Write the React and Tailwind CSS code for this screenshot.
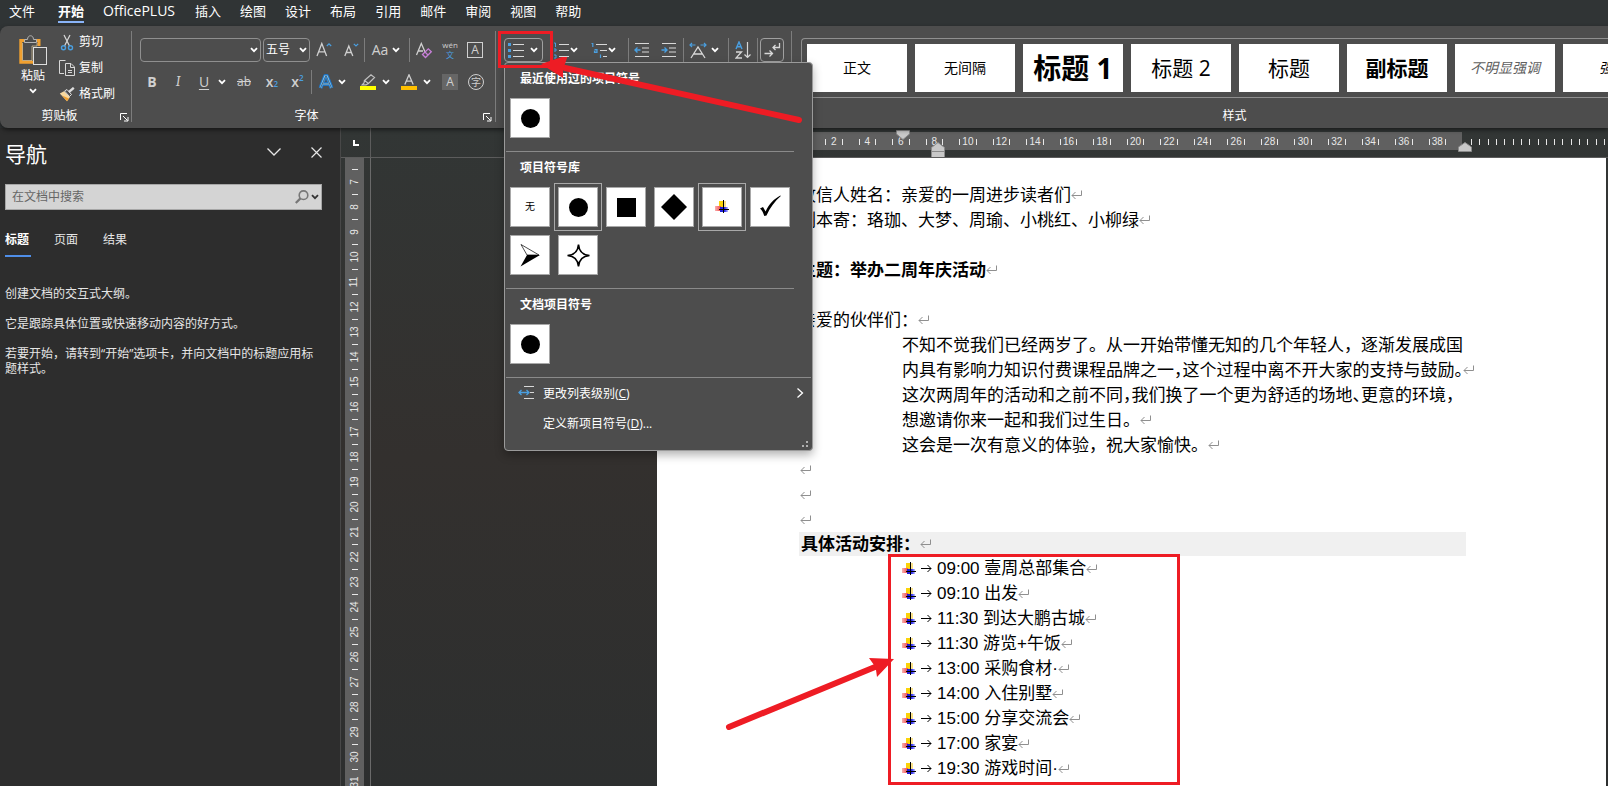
import { useState } from "react";

const menuTabs = ["文件", "开始", "OfficePLUS", "插入", "绘图", "设计", "布局", "引用", "邮件", "审阅", "视图", "帮助"];

const styleCards = [
  { name: "正文", className: "text-sm text-black" },
  { name: "无间隔", className: "text-sm text-black" },
  { name: "标题 1", className: "text-[28px] font-bold text-black" },
  { name: "标题 2", className: "text-[21px] text-black" },
  { name: "标题", className: "text-[21px] text-black", key: "title" },
  { name: "副标题", className: "text-[21px] font-bold text-black" },
  { name: "不明显强调", className: "text-sm italic text-[#606060]" },
  { name: "强调", className: "text-sm italic text-black" },
];

const schedule = [
  { time: "09:00", text: "壹周总部集合" },
  { time: "09:10", text: "出发" },
  { time: "11:30", text: "到达大鹏古城" },
  { time: "11:30", text: "游览+午饭" },
  { time: "13:00", text: "采购食材·" },
  { time: "14:00", text: "入住别墅" },
  { time: "15:00", text: "分享交流会" },
  { time: "17:00", text: "家宴" },
  { time: "19:30", text: "游戏时间·" },
];

const rulerNumbers = Array.from({ length: 19 }, (_, i) => (i + 1) * 2);
const outerTicks = Array.from({ length: 17 }, (_, i) => i);
const sideNumbers = Array.from({ length: 25 }, (_, i) => i + 7);

/* ---------- small shared pieces ---------- */

const Chevron = ({ className = "" }) => (
  <svg width="8" height="6" viewBox="0 0 8 6" fill="none" stroke="currentColor" strokeWidth="1.8" className={`shrink-0 ${className}`}>
    <path d="M1 1.2 L4 4.2 L7 1.2" />
  </svg>
);

const Divider = () => <div className="h-6 w-px shrink-0 bg-[#7d7d7d]" />;

const ToolButton = ({ label, className = "", children }) => (
  <button type="button" aria-label={label} className={`flex h-6 shrink-0 items-center justify-center ${className}`}>
    {children}
  </button>
);

const Launcher = ({ label }) => (
  <button type="button" aria-label={label} className="text-white">
    <svg width="9" height="9" viewBox="0 0 9 9" fill="none" stroke="currentColor">
      <path d="M0.5 7 V0.5 H7 M3 3 L7.5 7.5 M8 4 V8 H4" />
    </svg>
  </button>
);

const ReturnMark = () => (
  <svg width="12" height="10" viewBox="0 0 12 10" fill="none" stroke="#8f8f8f" className="inline-block shrink-0">
    <path d="M10.5 0.5 V5.5 H1 M4.5 2 L1 5.5 L4.5 9" />
  </svg>
);

const PictureBullet = () => (
  <svg width="14" height="14" viewBox="0 0 14 14" className="shrink-0">
    <defs>
      <linearGradient id="redFade" x1="0" x2="1">
        <stop offset="0" stopColor="#f9b0b0" />
        <stop offset="1" stopColor="#f04848" />
      </linearGradient>
      <linearGradient id="blueFade" x1="0" x2="1">
        <stop offset="0" stopColor="#1c1cd0" />
        <stop offset="0.6" stopColor="#2a2af0" />
        <stop offset="1" stopColor="#c4c4ff" />
      </linearGradient>
    </defs>
    <rect x="4" y="1" width="7" height="7" fill="#fbe38a" />
    <rect x="4" y="1" width="4" height="6" fill="#fbd30a" />
    <rect x="0" y="6" width="6" height="5" fill="url(#redFade)" />
    <rect x="5" y="7" width="8" height="5" fill="url(#blueFade)" />
    <path d="M8.5 0 V13 M4 9.5 H14" stroke="#000" fill="none" />
  </svg>
);

const Lines = ({ x = 6 }) => <path d={`M${x} 2.5 H16 M${x} 8.5 H16 M${x} 14.5 H16`} stroke="#d8d8d8" />;

/* ---------- ribbon ---------- */

const ClipboardGroup = () => (
  <section aria-label="剪贴板" className="flex w-[132px] shrink-0 flex-col border-r border-[#7d7d7d]">
    <div className="flex pl-3">
      <button type="button" className="flex w-[42px] flex-col items-center pt-1">
        <svg width="28" height="31" viewBox="0 0 28 31" fill="none">
          <path d="M6 5.5 H1.8 V27.2 H14 M17 5.5 H20 V11" stroke="#f0a030" strokeWidth="3" />
          <path d="M3.5 8 V25.5 H13 V11 H18 V8" stroke="#f7dba8" strokeWidth="0.6" />
          <path d="M5.5 7.5 V4.5 H8.5 C8.5 -0.5 14.5 -0.5 14.5 4.5 H17.5 V7.5 Z" fill="#4d4d4d" stroke="#b5b5b5" />
          <rect x="14.5" y="12.5" width="13" height="17" fill="#4d4d4d" stroke="#dedede" />
        </svg>
        <span className="mt-0.5 leading-4">粘贴</span>
        <Chevron className="mt-1" />
      </button>
      <div className="ml-[5px] flex flex-col gap-1">
        <button type="button" className="flex h-[22px] items-center gap-1">
          <svg width="16" height="17" viewBox="0 0 16 17" fill="none">
            <path d="M5 1 L10.5 12 M11 1 L5.5 12" stroke="#d8d8d8" strokeWidth="1.2" />
            <circle cx="4.5" cy="13.8" r="2" stroke="#4a9fe0" strokeWidth="1.4" />
            <circle cx="11.5" cy="13.8" r="2" stroke="#4a9fe0" strokeWidth="1.4" />
          </svg>
          剪切
        </button>
        <button type="button" className="flex h-[22px] items-center gap-1">
          <svg width="16" height="16" viewBox="0 0 16 16" fill="none" stroke="#d8d8d8">
            <path d="M5 13.5 H0.5 V0.5 H6.5" />
            <path d="M6.5 3.5 H12 L15.5 7 V15.5 H6.5 Z M11.5 3.5 V7.5 H15.5 M9 10.5 H13 M9 12.5 H13" />
          </svg>
          复制
        </button>
        <button type="button" className="flex h-[22px] items-center gap-1">
          <svg width="16" height="15" viewBox="0 0 16 15" fill="none">
            <path d="M0.8 6.5 L5 4.2 L11 10 L8 14.3 Z" fill="#f7d9a0" />
            <path d="M3 8.5 L10 11.5 L8 14.3 Z" fill="#f0a030" />
            <path d="M5.5 4 L8 2.5 L12.5 7.5 L10.5 9.5 Z" fill="#4d4d4d" stroke="#dedede" />
            <path d="M10 4.8 L14.8 0.8" stroke="#dedede" strokeWidth="2.4" />
          </svg>
          格式刷
        </button>
      </div>
    </div>
    <div className="mt-auto flex items-end leading-[12px]">
      <span className="flex-1 pl-[38px] text-center">剪贴板</span>
      <div className="flex w-[50px] pl-[39px]">
        <Launcher label="剪贴板设置" />
      </div>
    </div>
  </section>
);

const FontGroup = () => (
  <section aria-label="字体" className="flex w-[364px] shrink-0 flex-col border-r border-[#7d7d7d] pl-2 pt-[7px] text-[#d0d0d0]">
    <div className="flex items-center">
      <div className="relative flex items-center">
        <select aria-label="字体名称" className="h-6 w-[121px] appearance-none rounded border border-[#8f8f8f] bg-[#4d4d4d] px-1">
          <option></option>
        </select>
        <Chevron className="pointer-events-none absolute right-[3px] text-white" />
      </div>
      <div className="relative ml-0.5 flex items-center">
        <select aria-label="字号" className="h-6 w-[47px] appearance-none rounded border border-[#8f8f8f] bg-[#4d4d4d] px-0.5 text-xs text-white">
          <option>五号</option>
        </select>
        <Chevron className="pointer-events-none absolute right-[3px] text-white" />
      </div>
      <ToolButton label="增大字号" className="w-7">
        <svg width="16" height="16" viewBox="0 0 16 16" fill="none">
          <path d="M1 14 L5.8 1.5 L10.6 14 M2.8 9.8 H8.9" stroke="#d0d0d0" strokeWidth="1.3" />
          <path d="M10.8 4 L13 1.8 L15.2 4" stroke="#4a9fe0" strokeWidth="1.2" />
        </svg>
      </ToolButton>
      <ToolButton label="减小字号" className="w-[26px]">
        <svg width="16" height="16" viewBox="0 0 16 16" fill="none">
          <path d="M1.8 14 L5.8 4 L9.8 14 M3.3 10.5 H8.3" stroke="#d0d0d0" strokeWidth="1.3" />
          <path d="M10.8 1.8 L13 4 L15.2 1.8" stroke="#4a9fe0" strokeWidth="1.2" />
        </svg>
      </ToolButton>
      <Divider />
      <ToolButton label="更改大小写" className="w-[42px] gap-1 text-sm">
        Aa <Chevron className="text-white" />
      </ToolButton>
      <div className="ml-0.5">
        <Divider />
      </div>
      <ToolButton label="清除所有格式" className="w-7">
        <svg width="18" height="17" viewBox="0 0 18 17" fill="none">
          <path d="M1.5 13 L6.3 1.5 L10.5 11 M3.2 9 H8" stroke="#d0d0d0" strokeWidth="1.3" />
          <path d="M7.5 12.5 L13.3 6.8 L16.3 9.8 L10.5 15.5 Z M10 10 L13 13" stroke="#c77fd8" strokeWidth="1.3" />
        </svg>
      </ToolButton>
      <ToolButton label="拼音指南" className="w-6 flex-col gap-0.5">
        <span className="text-[8px] leading-[8px]">wén</span>
        <span className="text-[8px] leading-[8px] text-[#4a9fe0]">文</span>
      </ToolButton>
      <ToolButton label="字符边框" className="w-[26px]">
        <span className="flex size-4 items-center justify-center border border-[#d0d0d0] text-xs">A</span>
      </ToolButton>
    </div>
    <div className="mt-2 flex items-center text-sm">
      <ToolButton label="加粗" className="w-6 font-bold">B</ToolButton>
      <ToolButton label="倾斜" className="w-7 font-serif italic">I</ToolButton>
      <ToolButton label="下划线" className="w-6">
        <span className="underline underline-offset-2">U</span>
      </ToolButton>
      <ToolButton label="下划线样式" className="w-3 text-white"><Chevron /></ToolButton>
      <ToolButton label="删除线" className="w-8 text-xs">
        <span className="line-through">ab</span>
      </ToolButton>
      <ToolButton label="下标" className="w-6 font-semibold">
        x<sub className="text-[8px] text-[#4a9fe0]">2</sub>
      </ToolButton>
      <ToolButton label="上标" className="w-[27px] font-semibold">
        x<sup className="text-[8px] text-[#4a9fe0]">2</sup>
      </ToolButton>
      <Divider />
      <ToolButton label="文本效果和版式" className="ml-0.5 w-6">
        <svg width="16" height="16" viewBox="0 0 16 16" fill="none" strokeLinejoin="round">
          <path d="M2.5 14 L7.2 2 H8.8 L13.5 14 M5 10 H11" stroke="#1f74c4" strokeWidth="4" />
          <path d="M2.5 14 L7.2 2 H8.8 L13.5 14 M5 10 H11" stroke="#7cc4f5" strokeWidth="2" />
          <path d="M2.5 14 L8 1.5 L13.5 14 M5 10 H11" stroke="#35506a" strokeWidth="0.8" />
        </svg>
      </ToolButton>
      <ToolButton label="文本效果选项" className="w-2 text-white"><Chevron /></ToolButton>
      <ToolButton label="文本突出显示颜色" className="ml-2.5 w-6">
        <svg width="16" height="16" viewBox="0 0 16 16" fill="none">
          <path d="M4.5 6.5 L11 0.8 L14.5 3.5 L8.5 9.5 Z M4.5 6.5 L4 9 L2.2 10.8 H6 L8.5 9.5" stroke="#c0c0c0" strokeWidth="1.2" />
          <rect y="12" width="16" height="4" fill="#ffff00" />
        </svg>
      </ToolButton>
      <ToolButton label="突出显示选项" className="w-3 text-white"><Chevron /></ToolButton>
      <ToolButton label="字体颜色" className="ml-[5px] w-6">
        <svg width="16" height="16" viewBox="0 0 16 16" fill="none">
          <path d="M3.8 10.5 L8 0.8 L12.2 10.5 M5.2 7.2 H10.8" stroke="#d0d0d0" strokeWidth="1.3" />
          <rect y="12" width="16" height="4" fill="#ffc000" />
        </svg>
      </ToolButton>
      <ToolButton label="字体颜色选项" className="w-3 text-white"><Chevron /></ToolButton>
      <ToolButton label="字符底纹" className="ml-[5px] w-6">
        <span className="flex size-4 items-center justify-center bg-[#666666] text-xs">A</span>
      </ToolButton>
      <ToolButton label="带圈字符" className="ml-0.5 w-6">
        <span className="flex size-4 items-center justify-center rounded-full border border-[#d0d0d0] text-[10px]">字</span>
      </ToolButton>
    </div>
    <div className="mt-auto flex items-end leading-[12px] text-white">
      <span className="flex-1 pr-2.5 text-center">字体</span>
      <div className="flex w-3">
        <Launcher label="字体设置" />
      </div>
    </div>
  </section>
);

const Swatch = ({ label, selected, children }) => (
  <button
    type="button"
    aria-label={label}
    className={`flex size-10 items-center justify-center border border-[#a8a8a8] bg-white text-black ${
      selected ? "outline outline-offset-3 outline-[#a8a8a8]" : ""
    }`}
  >
    {children}
  </button>
);

const Disc = () => <span className="size-[19px] rounded-full bg-black" />;

const BulletMenu = () => (
  <div className="absolute -left-px top-[23px] z-10 h-[389px] w-[309px] rounded border border-[#9a9a9a] bg-[#4d4d4d] text-left text-xs text-white shadow-[0_4px_10px_rgba(0,0,0,0.3)]">
    <h3 className="mb-[3px] pl-[15px] font-bold leading-[32px]">最近使用过的项目符号</h3>
    <div className="pl-[5px]">
      <Swatch label="实心圆"><Disc /></Swatch>
    </div>
    <div className="ml-px mr-[18px] mt-[13px] h-px bg-[#8a8a8a]" />

    <h3 className="mb-[3px] pl-[15px] font-bold leading-[32px]">项目符号库</h3>
    <div className="flex flex-wrap gap-2 pl-[5px]">
      <Swatch label="无"><span className="text-[10px]">无</span></Swatch>
      <Swatch label="实心圆" selected><Disc /></Swatch>
      <Swatch label="实心方块"><span className="size-[19px] bg-black" /></Swatch>
      <Swatch label="菱形">
        <svg width="26" height="26" viewBox="0 0 26 26"><path d="M13 0 L26 13 L13 26 L0 13 Z" /></svg>
      </Swatch>
      <Swatch label="图片" selected><PictureBullet /></Swatch>
      <Swatch label="对勾">
        <svg width="24" height="28" viewBox="0 0 24 28">
          <path d="M2 15.5 L5 14 L7.6 18.5 C11 11 16 6 22.3 2.5 L22.8 3 C17 8 12 14.5 8.5 22.5 L6.3 23 C5.2 19.5 4 17 2 15.5 Z" />
        </svg>
      </Swatch>
      <Swatch label="箭头">
        <svg width="20" height="24" viewBox="0 0 20 24">
          <path d="M1 1.5 L19 12 H7 Z" fill="none" stroke="#000" strokeWidth="0.7" />
          <path d="M7 12 H20 L0.5 23.5 Z" />
        </svg>
      </Swatch>
      <Swatch label="四角星">
        <svg width="25" height="25" viewBox="0 0 25 25" fill="none" stroke="#000" strokeWidth="1.6">
          <path d="M12.5 1.5 C13 8 17 12 23.5 12.5 C17 13 13 17 12.5 23.5 C12 17 8 13 1.5 12.5 C8 12 12 8 12.5 1.5 Z" />
        </svg>
      </Swatch>
    </div>
    <div className="ml-px mr-[18px] mt-[13px] h-px bg-[#8a8a8a]" />

    <h3 className="mb-[3px] pl-[15px] font-bold leading-[32px]">文档项目符号</h3>
    <div className="pl-[5px]">
      <Swatch label="实心圆"><Disc /></Swatch>
    </div>
    <div className="mx-px mt-[13px] h-px bg-[#8a8a8a]" />

    <button type="button" className="flex h-[30px] w-full items-center pl-[13px] pr-2">
      <svg width="17" height="14" viewBox="0 0 17 14" fill="none">
        <path d="M6 0.5 H16 M12 6.5 H16 M6 12.5 H16" stroke="#d8d8d8" />
        <path d="M1 6.5 H11 M3.5 4 L1 6.5 L3.5 9 M8.5 4 L11 6.5 L8.5 9" stroke="#4a9fe0" strokeWidth="1.3" />
      </svg>
      <span className="ml-2 pt-0.5">更改列表级别(<u>C</u>)</span>
      <svg width="8" height="10" viewBox="0 0 8 10" fill="none" stroke="#fff" strokeWidth="1.3" className="ml-auto">
        <path d="M1.5 0.5 L6.5 5 L1.5 9.5" />
      </svg>
    </button>
    <button type="button" className="flex h-[30px] w-full items-center pl-[38px]">
      <span className="pt-0.5">定义新项目符号(<u>D</u>)...</span>
    </button>
    <svg width="6" height="6" viewBox="0 0 6 6" fill="#b0b0b0" className="ml-auto mr-1 mt-[3px]">
      <path d="M4 0 H6 V2 H4 Z M0 4 H2 V6 H0 Z M4 4 H6 V6 H4 Z" />
    </svg>
  </div>
);

const ParagraphGroup = () => (
  <section aria-label="段落" className="flex w-[296px] shrink-0 items-start border-r border-[#7d7d7d] pl-2 pt-[7px] text-white">
    <div className="relative flex h-6 w-[39px] shrink-0 items-center rounded border border-[#a0a0a0]">
      <button type="button" aria-label="项目符号" className="flex h-full w-full items-center justify-between pl-[3px] pr-1">
        <svg width="17" height="17" viewBox="0 0 17 17" fill="none">
          <path d="M0 1 H3 V4 H0 Z M0 7 H3 V10 H0 Z M0 13 H3 V16 H0 Z" fill="#4a9fe0" />
          <Lines x={5} />
        </svg>
        <Chevron />
      </button>
      <BulletMenu />
      {/* highlight frame and the arrow that points at it */}
      <div className="pointer-events-none absolute -left-[7px] -top-2 z-20 h-[37px] w-[55px] border-3 border-[#ee1c24]" />
      <svg width="264" height="72" viewBox="0 0 264 72" className="pointer-events-none absolute left-9 top-[18px] z-20">
        <path d="M258 63 L24 11" stroke="#ee1c24" strokeWidth="6" strokeLinecap="round" />
        <path d="M0 7 L27 -2 L24 7 L22 13 L22 21 Z" fill="#ee1c24" />
      </svg>
    </div>
    <ToolButton label="编号" className="ml-1 w-9 justify-between">
      <svg width="17" height="17" viewBox="0 0 17 17" fill="none">
        <path d="M1 1 H2.5 V5 M1 7 H3 V9 H1 M1 13 H3 V16 H1" stroke="#4a9fe0" />
        <Lines x={6} />
      </svg>
      <Chevron />
    </ToolButton>
    <ToolButton label="多级列表" className="ml-[5px] w-[31px] justify-between">
      <svg width="17" height="17" viewBox="0 0 17 17" fill="none">
        <path d="M0.5 1.5 H1.8 V5 M3.5 7.5 H6 V10.5 H3.5 V9 H6 M9.5 12.5 V16" stroke="#4a9fe0" strokeWidth="1.2" />
        <path d="M5 2.5 H16 M9 8.5 H16 M12 14.5 H16" stroke="#d8d8d8" />
      </svg>
      <Chevron />
    </ToolButton>
    <div className="ml-[9px] flex">
      <Divider />
    </div>
    <ToolButton label="减少缩进量" className="w-[26px]">
      <svg width="16" height="16" viewBox="0 0 16 16" fill="none">
        <path d="M1 1.5 H15 M8 6 H15 M8 10 H15 M1 14.5 H15" stroke="#d8d8d8" />
        <path d="M1 8 H6.5 M3.5 5.5 L1 8 L3.5 10.5" stroke="#4a9fe0" strokeWidth="1.4" />
      </svg>
    </ToolButton>
    <ToolButton label="增加缩进量" className="w-7">
      <svg width="16" height="16" viewBox="0 0 16 16" fill="none">
        <path d="M1 1.5 H15 M8 6 H15 M8 10 H15 M1 14.5 H15" stroke="#d8d8d8" />
        <path d="M0.5 8 H6 M3.5 5.5 L6 8 L3.5 10.5" stroke="#4a9fe0" strokeWidth="1.4" />
      </svg>
    </ToolButton>
    <Divider />
    <ToolButton label="中文版式" className="w-11 justify-start gap-1 pl-[5px]">
      <svg width="18" height="17" viewBox="0 0 18 17" fill="none">
        <path d="M2 16 L9 5 L16 16 M4.8 12 H13.2" stroke="#d8d8d8" strokeWidth="1.3" />
        <path d="M1 3 H6.5 M3 1 L1 3 L3 5 M11.5 3 H17 M15 1 L17 3 L15 5" stroke="#4a9fe0" strokeWidth="1.2" />
      </svg>
      <Chevron />
    </ToolButton>
    <Divider />
    <ToolButton label="排序" className="w-7">
      <svg width="17" height="18" viewBox="0 0 17 18" fill="none">
        <path d="M1 8 L4 1 L7 8 M2 5.8 H6" stroke="#4a9fe0" strokeWidth="1.4" />
        <path d="M1 11 H6.5 L1 17 H7" stroke="#d8d8d8" strokeWidth="1.3" />
        <path d="M12.5 1 V16.5 M9.5 13.5 L12.5 16.5 L15.5 13.5" stroke="#d8d8d8" strokeWidth="1.2" />
      </svg>
    </ToolButton>
    <Divider />
    <ToolButton label="显示编辑标记" className="ml-0.5 w-6 rounded border border-[#a0a0a0]">
      <svg width="17" height="16" viewBox="0 0 17 16" fill="none" stroke="#d8d8d8" strokeWidth="1.3">
        <path d="M15.5 1 V5.5 H9 M11.5 3 L9 5.5 L11.5 8" />
        <path d="M0.5 11.5 H8 M5.5 8.5 L8.5 11.5 L5.5 14.5" />
      </svg>
    </ToolButton>
  </section>
);

const StylesGroup = () => (
  <section aria-label="样式" className="flex min-w-0 flex-1 flex-col overflow-hidden pl-[9px] pt-[7px]">
    <div className="flex h-[60px] gap-2 overflow-hidden rounded-l border-y border-l border-[#8f8f8f] py-[5px] pl-[5px]">
      {styleCards.map((card) => (
        <button
          type="button"
          key={card.key || card.name}
          className={`h-12 w-[100px] shrink-0 bg-white leading-none whitespace-nowrap ${card.className}`}
        >
          {card.name}
        </button>
      ))}
    </div>
    <span className="mt-auto pl-[60px] text-center leading-[12px]">样式</span>
  </section>
);

const Ribbon = () => (
  <div className="relative z-20 flex h-[102px] shrink-0 rounded-l-lg bg-[#4d4d4d] pb-1.5 pt-[5px] text-xs text-white shadow-[0_2px_4px_rgba(0,0,0,0.5)]">
    <ClipboardGroup />
    <FontGroup />
    <ParagraphGroup />
    <StylesGroup />
  </div>
);

/* ---------- navigation pane ---------- */

const NavigationPane = () => {
  const [tab, setTab] = useState("标题");

  return (
    <aside className="w-[340px] shrink-0 bg-[#2d2d2d] px-[5px] text-xs text-[#e6e6e6]">
      <div className="flex h-14 items-center pr-[13px] pb-2">
        <h2 className="flex-1 pt-1 text-[21px] text-white">导航</h2>
        <button type="button" aria-label="任务窗格选项" className="mr-[30px]">
          <svg width="14" height="8" viewBox="0 0 14 8" fill="none" stroke="#e6e6e6" strokeWidth="1.3">
            <path d="M0.5 0.5 L7 7 L13.5 0.5" />
          </svg>
        </button>
        <button type="button" aria-label="关闭">
          <svg width="11" height="11" viewBox="0 0 11 11" fill="none" stroke="#e6e6e6" strokeWidth="1.2">
            <path d="M0.5 0.5 L10.5 10.5 M10.5 0.5 L0.5 10.5" />
          </svg>
        </button>
      </div>
      <div className="mr-[13px] flex h-[26px] items-center border border-[#a6a6a6] bg-[#d4d4d4] pr-[2px] text-[#777]">
        <input
          type="search"
          aria-label="在文档中搜索"
          placeholder="在文档中搜索"
          className="min-w-0 flex-1 bg-transparent pl-1.5 text-[#333] outline-none placeholder:text-[#666]"
        />
        <button type="button" aria-label="搜索">
          <svg width="14" height="14" viewBox="0 0 14 14" fill="none" stroke="currentColor">
            <circle cx="8.5" cy="5.2" r="4.3" strokeWidth="1.6" />
            <path d="M5.4 8.4 L0.8 13" strokeWidth="2.2" />
          </svg>
        </button>
        <button type="button" aria-label="搜索选项" className="ml-0.5 text-[#333]"><Chevron /></button>
      </div>
      <div role="tablist" className="mt-[21px] flex gap-[23px]">
        {["标题", "页面", "结果"].map((item) => (
          <button
            type="button"
            role="tab"
            aria-selected={tab === item}
            key={item}
            onClick={() => setTab(item)}
            className={`h-[26px] border-b-2 pr-0.5 pb-[7px] ${tab === item ? "border-[#4f8ee8] font-bold text-white" : "border-transparent"}`}
          >
            {item}
          </button>
        ))}
      </div>
      <div className="mt-[29px] mr-[13px] flex flex-col gap-[15px] leading-[15px]">
        <p>创建文档的交互式大纲。</p>
        <p>它是跟踪具体位置或快速移动内容的好方式。</p>
        <p>若要开始，请转到“开始”选项卡，并向文档中的标题应用标题样式。</p>
      </div>
    </aside>
  );
};

/* ---------- document area ---------- */

const HorizontalRuler = () => (
  <div className="flex min-w-0 flex-1 overflow-hidden pt-1 font-['Liberation_Sans',sans-serif] text-[10px] leading-none text-[#e8e8e8]">
    <div className="relative ml-[429px] flex h-[18px] w-[662px] shrink-0 bg-[#606060] pl-[17px] pr-2 pt-0.5">
      {rulerNumbers.map((n) => (
        <div key={n} className="flex min-w-0 flex-1 items-center justify-between px-2">
          <span className="h-1.5 w-px bg-[#e8e8e8]" />
          <span>{n}</span>
          <span className="h-1.5 w-px bg-[#e8e8e8]" />
        </div>
      ))}
      {/* indent markers */}
      <svg width="14" height="10" viewBox="0 0 14 10" className="absolute left-[96px] -top-0.5">
        <path d="M0.5 0.5 H13.5 V4 L7 9.5 L0.5 4 Z" fill="#c8c8c8" stroke="#8a8a8a" />
      </svg>
      <svg width="14" height="16" viewBox="0 0 14 16" className="absolute left-[131px] top-[10px]">
        <path d="M0.5 15.5 V5.5 L7 0.5 L13.5 5.5 V15.5 Z M0.5 9.5 H13.5" fill="#c8c8c8" stroke="#8a8a8a" />
      </svg>
      <svg width="14" height="10" viewBox="0 0 14 10" className="absolute left-[658px] top-[10px]">
        <path d="M0.5 9.5 V5 L7 0.5 L13.5 5 V9.5 Z" fill="#c8c8c8" stroke="#8a8a8a" />
      </svg>
    </div>
    <div className="flex h-[18px] flex-1 items-center justify-between pl-[9px] pr-[3px] pt-0.5">
      {outerTicks.map((n) => (
        <span key={n} className="h-1.5 w-px bg-[#e8e8e8]" />
      ))}
    </div>
  </div>
);

const VerticalRuler = () => (
  <div className="flex w-[30px] shrink-0 flex-col overflow-hidden border-r border-[#6a6a6a] pl-1 pr-1.5">
    <div className="flex shrink-0 flex-col items-center bg-[#606060] font-['Liberation_Sans',sans-serif] text-[10px] leading-none text-[#e8e8e8]">
      <div className="flex h-[11px] items-start">
        <span className="-mt-2 -rotate-90">6</span>
      </div>
      {sideNumbers.map((n) => (
        <div key={n} className="flex h-[25px] w-full flex-col items-center">
          <span className="h-px w-1.5 shrink-0 bg-[#e8e8e8]" />
          <span className="flex flex-1 items-center">
            <span className="-rotate-90">{n}</span>
          </span>
        </div>
      ))}
    </div>
  </div>
);

const Line = ({ className = "", mark = true, children }) => (
  <p className={`flex h-[25px] items-center whitespace-nowrap ${className}`}>
    {children && <span className="pt-0.5">{children}</span>}
    {mark && <ReturnMark />}
  </p>
);

// punctuation set at half width, as in justified lines
const Half = ({ children }) => <span className="[font-feature-settings:'halt']">{children}</span>;

const Page = () => (
  <article className="ml-[286px] mr-0.5 min-w-0 flex-1 overflow-hidden bg-white pl-[142px] pt-6 font-['Liberation_Sans','Noto_Sans_CJK_SC',sans-serif] text-[17px] text-black">
    <div className="max-w-[667px]">
      <Line>收信人姓名：亲爱的一周进步读者们</Line>
      <Line>副本寄：珞珈、大梦、周瑜、小桃红、小柳绿</Line>
      <Line mark={false} />
      <Line className="font-bold">主题：举办二周年庆活动</Line>
      <Line mark={false} />
      <Line>亲爱的伙伴们：</Line>
      <div className="pl-[103px]">
        <Line mark={false}>不知不觉我们已经两岁了。从一开始带懂无知的几个年轻人，逐渐发展成国</Line>
        <Line>
          内具有影响力知识付费课程品牌之一<Half>，</Half>这个过程中离不开大家的支持与鼓励<Half>。</Half>
        </Line>
        <Line mark={false}>
          这次两周年的活动和之前不同<Half>，</Half>我们换了一个更为舒适的场地<Half>、</Half>更意的环境<Half>，</Half>
        </Line>
        <Line>想邀请你来一起和我们过生日。</Line>
        <Line>这会是一次有意义的体验，祝大家愉快。</Line>
      </div>
      <div className="pl-px">
        <Line />
        <Line />
        <Line />
      </div>
      <h3 className="flex h-6 items-center bg-[#f0f0f0] pl-0.5 font-bold">
        <span className="pt-0.5">具体活动安排：</span>
        <ReturnMark />
      </h3>
      <div className="relative">
        <ul className="pl-[103px]">
          {schedule.map((item) => (
            <li key={`${item.time} ${item.text}`} className="flex h-[25px] items-center">
              <PictureBullet />
              <svg width="11" height="9" viewBox="0 0 11 9" fill="none" stroke="#000" className="ml-[5px] mr-1">
                <path d="M0 4.5 H10 M6.5 1 L10 4.5 L6.5 8" />
              </svg>
              <span className="ml-px whitespace-nowrap">{item.time} {item.text}</span>
              <ReturnMark />
            </li>
          ))}
        </ul>
        {/* highlight frame and its arrow */}
        <div className="pointer-events-none absolute -top-0.5 left-[89px] h-[231px] w-[292px] border-3 border-[#ee1c24]" />
        <svg width="170" height="78" viewBox="0 0 170 78" className="pointer-events-none absolute -left-[74px] top-[100px]">
          <path d="M4 71 L150 11" stroke="#ee1c24" strokeWidth="6" strokeLinecap="round" />
          <path d="M169 3 L144 2 L149 9 L151 14 L152 21 Z" fill="#ee1c24" />
        </svg>
      </div>
    </div>
  </article>
);

const App = () => (
  <div className="flex h-screen flex-col overflow-hidden bg-[#303435] font-['Open_Sans','Noto_Sans_CJK_SC',sans-serif]">
    <nav className="flex h-[26px] shrink-0 gap-[19px] pl-[9px] text-[13px] text-white">
      {menuTabs.map((item) => (
        <a
          key={item}
          href="#"
          className={`h-[23px] leading-[22px] whitespace-nowrap first:mr-1 ${item === "OfficePLUS" ? "mr-px text-sm" : ""} ${
            item === "开始" ? "border-b-2 border-[#8ab4f8] font-bold" : ""
          }`}
        >
          {item}
        </a>
      ))}
    </nav>
    <Ribbon />
    <div className="flex min-h-0 flex-1">
      <NavigationPane />
      <main className="flex min-w-0 flex-1 flex-col border-l border-[#484848] bg-linear-to-b from-[#323635] via-[#33302e] to-[#2d2f2f]">
        <div className="flex h-[30px] shrink-0 border-b border-[#5c5c5c]">
          <div className="flex w-[30px] shrink-0 items-center justify-center border-r border-[#5c5c5c]">
            <svg width="6" height="6" viewBox="0 0 6 6"><path d="M0 0 H2 V4 H6 V6 H0 Z" fill="#fff" /></svg>
          </div>
          <HorizontalRuler />
        </div>
        <div className="flex min-h-0 flex-1">
          <VerticalRuler />
          <Page />
        </div>
      </main>
    </div>
  </div>
);

export default App;
